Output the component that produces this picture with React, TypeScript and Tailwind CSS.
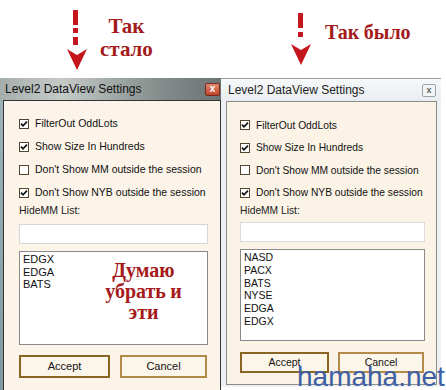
import type { ReactNode } from "react";

function Check({ on }: { on: boolean }) {
  return (
    <span className="w-[10px] h-[10px] shrink-0 border border-[#54462e] bg-white flex items-center justify-center">
      {on && (
        <svg width="8" height="8" viewBox="0 0 8 8">
          <path d="M1 3.6 L3 5.8 L7 1.6" stroke="#111" strokeWidth="1.7" fill="none" />
        </svg>
      )}
    </span>
  );
}

function Row({ on, children, h }: { on: boolean; children: ReactNode; h: string }) {
  return (
    <div className={`flex items-center gap-[6px] ${h}`}>
      <Check on={on} />
      <span className="text-[#111] whitespace-nowrap">{children}</span>
    </div>
  );
}

function Arrow({ right }: { right?: boolean }) {
  if (right) {
    return (
      <svg width="20" height="78" viewBox="0 0 20 78" className="shrink-0">
        <rect x="7" y="13" width="5" height="15" fill="#c4161c" />
        <rect x="7" y="32" width="5" height="5" fill="#c4161c" />
        <path d="M0 44 L10 50 L20 44 L10 65 Z" fill="#c4161c" />
      </svg>
    );
  }
  return (
    <svg width="20" height="78" viewBox="0 0 20 78" className="shrink-0">
      <rect x="6" y="10" width="5" height="15" fill="#c4161c" />
      <rect x="6" y="28" width="5" height="5" fill="#c4161c" />
      <rect x="6" y="37" width="5" height="8" fill="#c4161c" />
      <path d="M0 49 L10 55 L20 49 L10 70 Z" fill="#c4161c" />
    </svg>
  );
}

export default function App() {
  return (
    <div className="relative w-[446px] h-[390px] overflow-hidden bg-white font-['Liberation_Sans',Arial,sans-serif]">
      {/* captions */}
      <div className="flex h-[78px]">
        <div className="w-[221px] flex pl-[67px]">
          <Arrow />
          <div className="ml-[13px] pt-[15px] flex flex-col items-center font-serif font-bold text-[21px] leading-[23px] text-[#a31b1b]">
            <span>Так</span>
            <span>стало</span>
          </div>
        </div>
        <div className="flex pl-[70px]">
          <Arrow right />
          <div className="ml-[14px] pt-[21px] font-serif font-bold text-[20px] leading-[23px] text-[#a31b1b] whitespace-nowrap">
            Так было
          </div>
        </div>
      </div>

      <div className="flex items-start">
        {/* new window */}
        <div className="w-[221px] h-[312px] flex flex-col bg-[linear-gradient(180deg,#9fb3ba,#7f9aa3)]">
          <div className="h-[22px] flex items-center justify-between pl-[5px] pr-[1px] bg-[linear-gradient(90deg,#a6aeac_0%,#c5cac7_28%,#a3aba9_50%,#828a89_75%,#6d7574_100%)]">
            <span className="text-[12px] text-[#111]">Level2 DataView Settings</span>
            <span className="w-[15px] h-[13px] rounded-[2px] border border-[#7a2a1c] bg-[linear-gradient(180deg,#e08a70,#c0432a)] flex items-center justify-center text-white text-[10px] font-bold leading-none">
              x
            </span>
          </div>
          <div className="flex-1 ml-[3px] border-l border-t border-r border-[#333] bg-[#fcf4e8] flex flex-col pl-[15px] pr-[12px] pt-[11px] text-[10.5px]">
            <Row on h="h-[23px]">FilterOut OddLots</Row>
            <Row on h="h-[23px]">Show Size In Hundreds</Row>
            <Row on={false} h="h-[23px]">Don't Show MM outside the session</Row>
            <Row on h="h-[23px]">Don't Show NYB outside the session</Row>
            <div className="h-[12px] flex items-center text-[#222] mt-[1px]">HideMM List:</div>
            <div className="mt-[7px] h-[20px] bg-white border border-[#d6d6d6]" />
            <div className="mt-[7px] h-[94px] bg-white border border-[#8a8a8a] flex">
              <div className="w-[60px] pl-[3px] pt-[1px] text-[11px] leading-[12.5px] text-[#111] flex flex-col">
                <span>EDGX</span>
                <span>EDGA</span>
                <span>BATS</span>
              </div>
              <div className="flex-1 pt-[8px] flex flex-col items-center font-serif font-bold text-[20px] leading-[21px] text-[#a51a1a]">
                <span>Думаю</span>
                <span>убрать и</span>
                <span>эти</span>
              </div>
            </div>
            <div className="mt-[10px] flex gap-[10px] text-[11px] text-[#111]">
              <div className="w-[91px] h-[23px] border-2 border-[#8a6524] bg-[#fcf5ea] flex items-center justify-center">Accept</div>
              <div className="w-[87px] h-[23px] border-2 border-[#b38a48] bg-[#fcf5ea] flex items-center justify-center">Cancel</div>
            </div>
          </div>
        </div>

        {/* old window */}
        <div className="w-[220px] h-[309px] flex flex-col bg-[#eef1f3] border-t border-[#9aa2a6] pl-[5px] pr-[4px] pb-[2px]">
          <div className="h-[22px] -ml-[5px] -mr-[4px] flex items-center justify-between pl-[7px] pr-[5px] bg-[linear-gradient(180deg,#f6f8f9,#e9edef)]">
            <span className="text-[12px] text-[#222]">Level2 DataView Settings</span>
            <span className="w-[14px] h-[13px] rounded-[2px] border border-[#9aa3aa] bg-[#f2f4f6] flex items-center justify-center text-[#666] text-[9px] font-bold leading-none">
              x
            </span>
          </div>
          <div className="flex-1 border border-[#8c8c8c] bg-[#fbf3e6] flex flex-col pl-[13px] pr-[11px] pt-[12px] text-[10.25px]">
            <Row on h="h-[22.5px]">FilterOut OddLots</Row>
            <Row on h="h-[22.5px]">Show Size In Hundreds</Row>
            <Row on={false} h="h-[22.5px]">Don't Show MM outside the session</Row>
            <Row on h="h-[22.5px]">Don't Show NYB outside the session</Row>
            <div className="h-[14px] flex items-center text-[#222]">HideMM List:</div>
            <div className="mt-[4px] h-[20px] bg-white border border-[#dcdcdc]" />
            <div className="mt-[7px] h-[92px] bg-white border border-[#8a8a8a] pl-[3px] pt-[1px] flex flex-col text-[10.5px] leading-[12.8px] text-[#111]">
              <span>NASD</span>
              <span>PACX</span>
              <span>BATS</span>
              <span>NYSE</span>
              <span>EDGA</span>
              <span>EDGX</span>
            </div>
            <div className="mt-[11px] flex gap-[9px] text-[10.5px] text-[#111]">
              <div className="w-[89px] h-[21px] border-2 border-[#8a6524] bg-[#fcf5ea] flex items-center justify-center">Accept</div>
              <div className="w-[86px] h-[21px] border-2 border-[#b38a48] bg-[#fcf5ea] flex items-center justify-center">Cancel</div>
            </div>
          </div>
        </div>
      </div>

      <span className="absolute left-[297px] top-[363px] text-[28px] leading-none text-[#3d5fa6] whitespace-nowrap">
        hamaha.net
      </span>
    </div>
  );
}
